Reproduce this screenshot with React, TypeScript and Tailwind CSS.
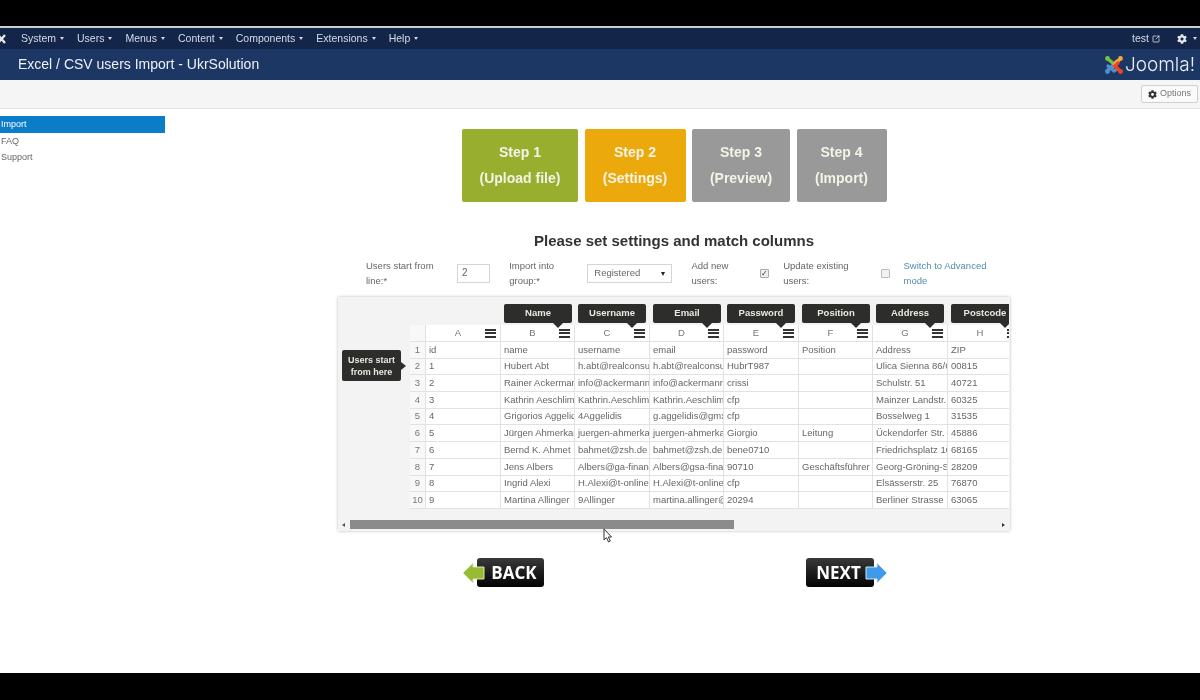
import { FaCog } from "react-icons/fa";
import { SquareArrowOutUpRight } from "lucide-react";

const nav = ["System", "Users", "Menus", "Content", "Components", "Extensions", "Help"];
const labels = ["Name", "Username", "Email", "Password", "Position", "Address", "Postcode"];
const letters = ["A", "B", "C", "D", "E", "F", "G", "H"];
const rows = [
  ["id", "name", "username", "email", "password", "Position", "Address", "ZIP"],
  ["1", "Hubert Abt", "h.abt@realconsulting.de", "h.abt@realconsulting.de", "HubrT987", "", "Ulica Sienna 86/62", "00815"],
  ["2", "Rainer Ackermann", "info@ackermann.info", "info@ackermann.info", "crissi", "", "Schulstr. 51", "40721"],
  ["3", "Kathrin Aeschlimann", "Kathrin.Aeschlimann", "Kathrin.Aeschlimann", "cfp", "", "Mainzer Landstr. 176", "60325"],
  ["4", "Grigorios Aggelidis", "4Aggelidis", "g.aggelidis@gmx.de", "cfp", "", "Bosselweg 1", "31535"],
  ["5", "Jürgen Ahmerkamp", "juergen-ahmerkamp", "juergen-ahmerkamp", "Giorgio", "Leitung", "Ückendorfer Str. 237", "45886"],
  ["6", "Bernd K. Ahmet", "bahmet@zsh.de", "bahmet@zsh.de", "bene0710", "", "Friedrichsplatz 10", "68165"],
  ["7", "Jens Albers", "Albers@ga-finanz.de", "Albers@gsa-finanz.de", "90710", "Geschäftsführer", "Georg-Gröning-Str. 8", "28209"],
  ["8", "Ingrid Alexi", "H.Alexi@t-online.de", "H.Alexi@t-online.de", "cfp", "", "Elsässerstr. 25", "76870"],
  ["9", "Martina Allinger", "9Allinger", "martina.allinger@web.de", "20294", "", "Berliner Strasse 1", "63065"],
];
const steps = [
  { a: "Step 1", b: "(Upload file)", c: "w-[116px] bg-[#98ae2f]" },
  { a: "Step 2", b: "(Settings)", c: "w-[101px] bg-[#eca90b]" },
  { a: "Step 3", b: "(Preview)", c: "w-[98px] bg-[#999999]" },
  { a: "Step 4", b: "(Import)", c: "w-[90px] bg-[#999999]" },
];

function Bars() {
  return (
    <span className="flex w-[11px] shrink-0 flex-col gap-[1.5px]">
      <span className="h-[2px] bg-[#333]" />
      <span className="h-[2px] bg-[#333]" />
      <span className="h-[2px] bg-[#333]" />
    </span>
  );
}

function Caret() {
  return <span className="h-0 w-0 border-x-[2.5px] border-t-[3px] border-x-transparent border-t-[#cfd6e2]" />;
}

function Logo() {
  return (
    <svg width="20" height="22" viewBox="0 0 20 22" fill="none" strokeWidth="3.4" strokeLinecap="round">
      <path d="M4 5 L10 10 L13 7" stroke="#7ac143" />
      <path d="M16 5 L10 11 L7 14" stroke="#f9a541" />
      <path d="M3 17 L8 12" stroke="#5091cd" />
      <path d="M4 12 L10 17 L13 15" stroke="#5091cd" />
      <path d="M16 17 L11 12 L14 9" stroke="#f44321" />
      <circle cx="3.5" cy="4.5" r="2.4" fill="#7ac143" />
      <circle cx="16.5" cy="4.5" r="2.4" fill="#f9a541" />
      <circle cx="3.5" cy="17.5" r="2.4" fill="#5091cd" />
      <circle cx="16.5" cy="17.5" r="2.4" fill="#f44321" />
    </svg>
  );
}

function BackNext({ text, next }: { text: string; next?: boolean }) {
  const arrow = (
    <svg width="23" height="22" viewBox="0 0 23 22" className={next ? "absolute left-[59px] top-[4px]" : "absolute -left-[15px] top-[4px]"}>
      {next ? (
        <path d="M1 5 H12 V1 L22 11 L12 21 V17 H1 Z" fill="#3f9bea" stroke="#cfe6f7" strokeWidth="1" />
      ) : (
        <path d="M22 5 H11 V1 L1 11 L11 21 V17 H22 Z" fill="#97bb34" stroke="#dbe8b5" strokeWidth="1" />
      )}
    </svg>
  );
  return (
    <div className={`relative flex h-[29px] items-center justify-center rounded-[3px] bg-gradient-to-b from-[#3a3a3a] to-[#050505] font-['Open_Sans',sans-serif] text-[17px] font-bold text-white ${next ? "w-[68px] pr-[3px]" : "w-[67px] pl-[7px]"}`}>
      {text}
      {arrow}
    </div>
  );
}

export default function App() {
  return (
    <div className="flex h-[700px] w-[1200px] flex-col overflow-hidden bg-white font-['Liberation_Sans',sans-serif] blur-[0.35px]">
      <div className="h-[26px] shrink-0 bg-black" />
      <div className="h-[2px] shrink-0 bg-[#c9ccd0]" />
      <header className="flex h-[21px] shrink-0 items-center bg-[#14254a] text-[10.5px] text-[#d5dbe6]">
        <svg width="6" height="12" viewBox="0 0 6 12" className="ml-0 shrink-0">
          <path d="M-2 2 L5 10 M5 2 L-2 10" stroke="#e8e8e8" strokeWidth="2.4" />
        </svg>
        <nav className="ml-[15px] flex gap-[13px]">
          {nav.map((n) => (
            <span key={n} className="flex items-center gap-[4px]">
              {n}
              <Caret />
            </span>
          ))}
        </nav>
        <div className="ml-auto flex items-center pr-[3px]">
          <span>test</span>
          <SquareArrowOutUpRight size={8} strokeWidth={2.5} className="ml-[3px]" />
          <FaCog size={10} className="ml-[17px] text-[#e4e8ee]" />
          <span className="ml-[6px] flex"><Caret /></span>
        </div>
      </header>
      <div className="flex h-[31px] shrink-0 items-center justify-between bg-[#1c3764] pl-[18px] pr-[5px]">
        <h1 className="text-[14px] text-[#eef1f5]">Excel / CSV users Import - UkrSolution</h1>
        <div className="flex items-center gap-[1px]">
          <Logo />
          <span className="font-['Inter',sans-serif] text-[19px] leading-none font-light text-[#e8edf4]">Joomla!</span>
        </div>
      </div>
      <div className="flex h-[29px] shrink-0 items-center justify-end border-b border-[#e6e6e6] bg-[#f5f5f5] pr-[2px]">
        <button className="flex h-[18px] w-[57px] items-center justify-center gap-[3px] rounded-[2px] border border-[#cfcfcf] bg-[#fafafa] text-[9px] text-[#777]">
          <FaCog size={9} className="text-[#333]" />
          Options
        </button>
      </div>
      <main className="flex min-h-0 flex-1">
        <aside className="w-[165px] shrink-0 pt-[7px] text-[9px] leading-[16px] text-[#666]">
          <div className="h-[17px] bg-[#0a7cc8] pl-[1px] text-white">Import</div>
          <div className="pl-[1px]">FAQ</div>
          <div className="pl-[1px]">Support</div>
        </aside>
        <section className="relative ml-[173px] w-[672px] pt-[20px]">
          <div className="ml-[124px] flex gap-[6.5px]">
            {steps.map((s) => (
              <div key={s.a} className={`flex h-[73px] flex-col items-center justify-center gap-[11px] rounded-[2px] text-[14px] leading-[15px] font-bold text-[#f3f3e6] ${s.c}`}>
                <span>{s.a}</span>
                <span>{s.b}</span>
              </div>
            ))}
          </div>
          <h2 className="mt-[30px] text-center text-[15px] leading-[18px] font-bold text-[#333]">Please set settings and match columns</h2>
          <div className="mt-[14px] flex h-[19px] items-center pl-[28px] text-[9.5px] text-[#666]">
            <span>Users start from line:*</span>
            <span className="ml-[2px] flex h-[19px] w-[34px] items-start border border-[#d5d5d5] pl-[4px] text-[10px] leading-[15px]">2</span>
            <span className="ml-[19px]">Import into group:*</span>
            <span className="ml-[2px] flex h-[19px] w-[87px] items-center justify-between border border-[#d5d5d5] px-[6px] text-[#666]">
              Registered
              <span className="h-0 w-0 border-x-[2.5px] border-t-[4px] border-x-transparent border-t-[#222]" />
            </span>
            <span className="ml-[19px]">Add new users:</span>
            <span className="ml-[5px] flex h-[9px] w-[9px] items-center justify-center rounded-[1px] border border-[#aaa] bg-[#eee] text-[8px] leading-none text-[#333]">✓</span>
            <span className="ml-[14px]">Update existing users:</span>
            <span className="ml-[6px] h-[9px] w-[9px] rounded-[1px] border border-[#bbb] bg-[#f2f2f2]" />
            <span className="ml-[14px] text-[#4f8fa8]">Switch to Advanced mode</span>
          </div>
          <div className="mt-[14px] flex h-[234px] w-[672px] flex-col bg-[#f3f3f3] shadow-[0_0_3px_#bbbbbb]">
            <div className="flex min-h-0 flex-1">
              <div className="w-[72px] shrink-0 pl-[4px] pt-[53px]">
                <div className="relative flex h-[31px] w-[59px] flex-col items-center justify-center rounded-[2px] bg-[#2d2d2b] text-[9px] leading-[12px] font-bold text-[#e8e8e0]">
                  <span>Users start</span>
                  <span>from here</span>
                  <span className="absolute -right-[5px] top-[12px] h-0 w-0 border-y-[4px] border-l-[5px] border-y-transparent border-l-[#2d2d2b]" />
                </div>
              </div>
              <div className="w-[599px] overflow-hidden pt-[7px]">
                <div className="grid w-[613px] grid-cols-[16px_75px_74px_75px_74px_75px_74px_75px_75px]">
                  <div className="col-span-2" />
                  {labels.map((l) => (
                    <div key={l} className="relative ml-[3px] flex h-[19px] w-[68px] items-center justify-center rounded-[2px] bg-[#2d2d2b] text-[9.5px] font-bold text-[#e8e8e0]">
                      {l}
                      <span className="absolute right-[9px] top-[19px] h-0 w-0 border-x-[5px] border-t-[5px] border-x-transparent border-t-[#2d2d2b]" />
                    </div>
                  ))}
                </div>
                <div className="mt-[2px] grid w-[613px] grid-cols-[16px_75px_74px_75px_74px_75px_74px_75px_75px] text-[9.5px] text-[#666]">
                  <div className="h-[17px] border-r border-b border-[#e2e2e2] bg-[#f8f8f8]" />
                  {letters.map((l) => (
                    <div key={l} className="flex h-[17px] items-center border-r border-b border-[#e2e2e2] bg-white pr-[4px]">
                      <span className="flex-1 pl-[5px] text-center text-[#777]">{l}</span>
                      <Bars />
                    </div>
                  ))}
                  {rows.map((r, i) => (
                    <div key={i} className="contents">
                      <div className="flex h-[16.7px] items-center justify-center border-r border-b border-[#e2e2e2] bg-[#f8f8f8] text-[#777]">{i + 1}</div>
                      {r.map((c, j) => (
                        <div key={j} className="flex h-[16.7px] items-center overflow-hidden border-r border-b border-[#e2e2e2] bg-white pl-[3px] whitespace-nowrap">
                          {c}
                        </div>
                      ))}
                    </div>
                  ))}
                </div>
              </div>
            </div>
            <div className="flex h-[12px] shrink-0 items-center pb-[1px] pl-[4px] pr-[5px]">
              <span className="h-0 w-0 border-y-[2.5px] border-r-[3px] border-y-transparent border-r-[#555]" />
              <span className="ml-[5px] h-[9px] w-[384px] bg-[#8b8b8b]" />
              <span className="ml-auto h-0 w-0 border-y-[2.5px] border-l-[3px] border-y-transparent border-l-[#333]" />
            </div>
          </div>
          <div className="ml-[139px] mt-[27px] flex w-[397px] justify-between">
            <BackNext text="BACK" />
            <BackNext text="NEXT" next />
          </div>
          <svg width="10" height="15" viewBox="0 0 10 15" className="absolute left-[265px] top-[419px]">
            <path d="M1 1 V12 L3.5 9.5 L5.5 14 L7.3 13 L5.3 9 H8.5 Z" fill="#fff" stroke="#333" strokeWidth="1" />
          </svg>
        </section>
      </main>
      <div className="h-[27px] shrink-0 bg-black" />
    </div>
  );
}
